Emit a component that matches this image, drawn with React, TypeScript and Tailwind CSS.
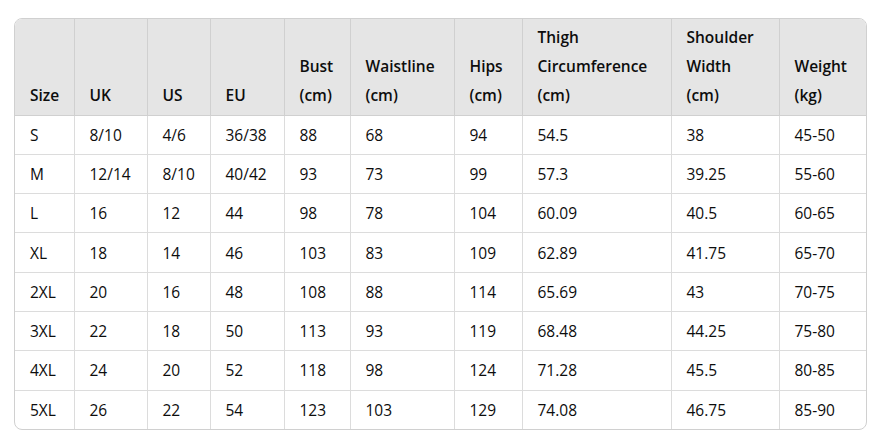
const columns = [
  { label: ["Size"], width: "w-[59px]" },
  { label: ["UK"], width: "w-[73px]" },
  { label: ["US"], width: "w-[63px]" },
  { label: ["EU"], width: "w-[74px]" },
  { label: ["Bust", "(cm)"], width: "w-[66px]" },
  { label: ["Waistline", "(cm)"], width: "w-[104px]" },
  { label: ["Hips", "(cm)"], width: "w-[68px]" },
  { label: ["Thigh", "Circumference", "(cm)"], width: "w-[149px]" },
  { label: ["Shoulder", "Width", "(cm)"], width: "w-[108px]" },
  { label: ["Weight", "(kg)"], width: "w-[87px]" },
];

const rows = [
  ["S", "8/10", "4/6", "36/38", "88", "68", "94", "54.5", "38", "45-50"],
  ["M", "12/14", "8/10", "40/42", "93", "73", "99", "57.3", "39.25", "55-60"],
  ["L", "16", "12", "44", "98", "78", "104", "60.09", "40.5", "60-65"],
  ["XL", "18", "14", "46", "103", "83", "109", "62.89", "41.75", "65-70"],
  ["2XL", "20", "16", "48", "108", "88", "114", "65.69", "43", "70-75"],
  ["3XL", "22", "18", "50", "113", "93", "119", "68.48", "44.25", "75-80"],
  ["4XL", "24", "20", "52", "118", "98", "124", "71.28", "45.5", "80-85"],
  ["5XL", "26", "22", "54", "123", "103", "129", "74.08", "46.75", "85-90"],
];

export default function SizeChart() {
  return (
    <div className="min-h-screen bg-white pl-[14px] pt-[18px] font-['Open_Sans',sans-serif] text-[15.5px] text-[#0d0d0d]">
      <div className="w-[853px] overflow-hidden rounded-lg border border-[#d0d0d0]">
        <table className="w-full table-fixed border-collapse">
          <colgroup>
            {columns.map((c, i) => (
              <col key={i} className={c.width} />
            ))}
          </colgroup>
          <thead>
            <tr className="h-[96px] bg-[#e5e5e5]">
              {columns.map((c, i) => (
                <th
                  key={i}
                  className="border-b border-l border-[#d0d0d0] px-[15px] pb-[5px] text-left align-bottom font-semibold leading-[29px] first:border-l-0"
                >
                  {c.label.map((line) => (
                    <div key={line}>{line}</div>
                  ))}
                </th>
              ))}
            </tr>
          </thead>
          <tbody>
            {rows.map((r, ri) => (
              <tr key={ri} className="h-[39.3px]">
                {r.map((v, ci) => (
                  <td
                    key={ci}
                    className={`border-l border-[#dcdcdc] px-[15px] leading-[28px] first:border-l-0 ${
                      ri < rows.length - 1 ? "border-b" : ""
                    }`}
                  >
                    {v}
                  </td>
                ))}
              </tr>
            ))}
          </tbody>
        </table>
      </div>
    </div>
  );
}
